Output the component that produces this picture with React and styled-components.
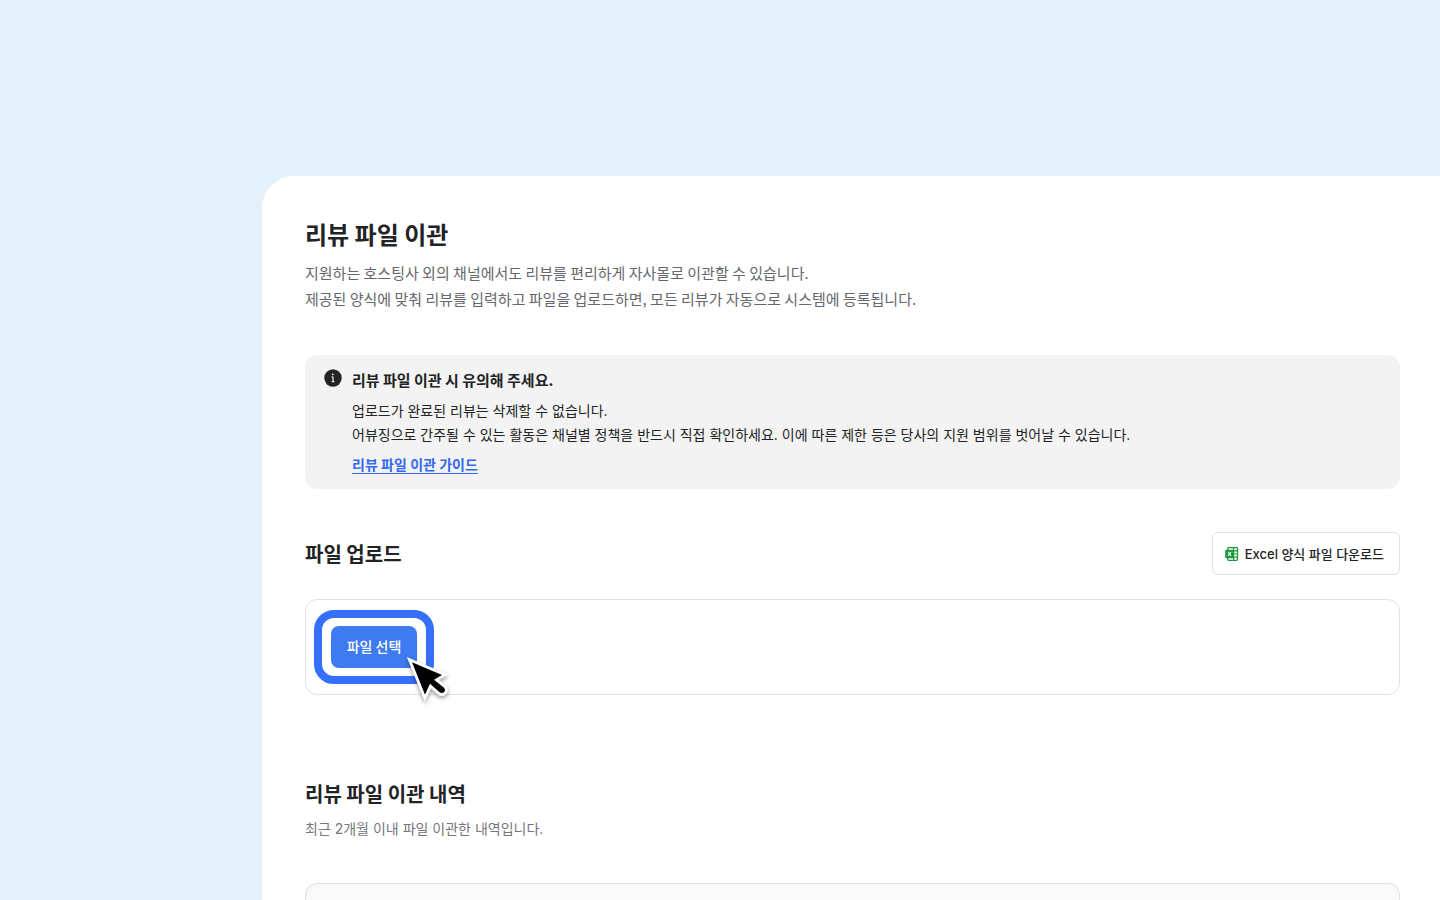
import styled, { createGlobalStyle } from 'styled-components';

const App = () => {
  return (
    <>
      <GlobalStyle />
      <PageStyled>
        <PanelStyled>
          <PageTitle>리뷰 파일 이관</PageTitle>
          <Description>
            지원하는 호스팅사 외의 채널에서도 리뷰를 편리하게 자사몰로 이관할 수 있습니다.
            <br />
            제공된 양식에 맞춰 리뷰를 입력하고 파일을 업로드하면, 모든 리뷰가 자동으로 시스템에 등록됩니다.
          </Description>

          <NoticeStyled>
            <InfoIcon />
            <div>
              <h2>리뷰 파일 이관 시 유의해 주세요.</h2>
              <p>
                업로드가 완료된 리뷰는 삭제할 수 없습니다.
                <br />
                어뷰징으로 간주될 수 있는 활동은 채널별 정책을 반드시 직접 확인하세요. 이에 따른 제한 등은 당사의 지원 범위를 벗어날 수 있습니다.
              </p>
              <a href="#guide">리뷰 파일 이관 가이드</a>
            </div>
          </NoticeStyled>

          <UploadHeader>
            <SectionTitle>파일 업로드</SectionTitle>
            <DownloadButton type="button">
              <ExcelIcon />
              Excel 양식 파일 다운로드
            </DownloadButton>
          </UploadHeader>

          <UploadBox>
            <Highlight>
              <SelectButton type="button">파일 선택</SelectButton>
              <Cursor />
            </Highlight>
          </UploadBox>

          <HistoryStyled>
            <SectionTitle>리뷰 파일 이관 내역</SectionTitle>
            <p>최근 2개월 이내 파일 이관한 내역입니다.</p>
            <HistoryList />
          </HistoryStyled>
        </PanelStyled>
      </PageStyled>
    </>
  );
};

const InfoIcon = () => (
  <svg width="18" height="18" viewBox="0 0 18 18" aria-hidden="true">
    <circle cx="9" cy="9" r="8.7" fill="#222325" />
    <circle cx="8.8" cy="5.3" r="0.9" fill="#fff" />
    <path d="M7.4 8h1.6v4.6M7.6 12.7h2.8" fill="none" stroke="#fff" strokeWidth="1.1" />
  </svg>
);

const ExcelIcon = () => (
  <svg width="14" height="16" viewBox="0 0 14 16" aria-hidden="true">
    <rect x="2.8" y="1.6" width="9.7" height="12.8" rx="0.8" fill="#fff" stroke="#1c9a3c" strokeWidth="1.3" />
    <path d="M8.6 1.5v13M3 4.8h9.5M8 8h4.7M3 11.2h9.5" stroke="#1c9a3c" strokeWidth="1.2" />
    <rect x="0.2" y="3.8" width="8.8" height="8.4" rx="0.8" fill="#1c9a3c" />
    <path d="M3.2 6.1l2.8 3.8M6 6.1l-2.8 3.8" stroke="#fff" strokeWidth="1.1" />
  </svg>
);

const Cursor = () => (
  <CursorStyled viewBox="0 0 192 192" aria-hidden="true">
    <path
      d="M51 52L141 90L117 104L147 128Q153 135 147 142Q140 147 133 141L105 116L90 149Z"
      fill="#000"
      stroke="#fff"
      strokeWidth="17"
      strokeLinejoin="miter"
      paintOrder="stroke"
    />
  </CursorStyled>
);

const GlobalStyle = createGlobalStyle`
  * {
    box-sizing: border-box;
    margin: 0;
  }

  body {
    background: #e4f1fa;
    color: #222325;
    font-family: 'Noto Sans CJK KR', sans-serif;
  }

  button {
    font-family: inherit;
    cursor: pointer;
  }
`;

const PageStyled = styled.div`
  display: flex;
  height: 100vh;
  padding: 176px 0 0 262px;
  overflow: hidden;
`;

const PanelStyled = styled.main`
  flex: 1;
  min-width: 0;
  display: flex;
  flex-direction: column;
  padding: 40px 40px 0 43px;
  border-top-left-radius: 32px;
  background: #fff;
`;

const PageTitle = styled.h1`
  font-size: 24px;
  line-height: 36px;
  font-weight: 700;
`;

const Description = styled.p`
  margin-top: 8px;
  font-size: 15px;
  line-height: 26px;
  color: #66676d;
`;

const NoticeStyled = styled.section`
  display: flex;
  align-items: flex-start;
  gap: 10px;
  margin-top: 43px;
  padding: 14px 19px 12px;
  border-radius: 12px;
  background: #f3f3f3;

  svg {
    flex: none;
  }

  h2 {
    font-size: 15px;
    line-height: 22px;
    font-weight: 700;
  }

  p {
    margin: 8px 0 6px;
    font-family: Inter, 'Noto Sans CJK KR', sans-serif;
    font-size: 14px;
    line-height: 24px;
  }

  a {
    display: block;
    width: fit-content;
    font-family: Inter, 'Noto Sans CJK KR', sans-serif;
    font-size: 14px;
    line-height: 24px;
    font-weight: 700;
    color: #3568f0;
    text-underline-offset: 3px;
  }
`;

const UploadHeader = styled.div`
  display: flex;
  align-items: center;
  justify-content: space-between;
  margin-top: 43px;
`;

const SectionTitle = styled.h2`
  font-size: 20px;
  line-height: 28px;
  font-weight: 700;
`;

const DownloadButton = styled.button`
  display: flex;
  align-items: center;
  gap: 6px;
  height: 43px;
  padding: 0 15px 0 12px;
  border: 1px solid #e2e2e3;
  border-radius: 6px;
  background: #fff;
  color: #222325;
  font-family: Inter, 'Noto Sans CJK KR', sans-serif;
  font-size: 13px;
  font-weight: 500;
`;

const UploadBox = styled.div`
  display: flex;
  margin-top: 24px;
  padding: 10px 8px;
  border: 1px solid #e2e2e3;
  border-radius: 12px;
`;

const Highlight = styled.div`
  position: relative;
  padding: 8px 9px;
  border: 8px solid #3470fb;
  border-radius: 20px;
`;

const SelectButton = styled.button`
  display: block;
  width: 86px;
  height: 42px;
  padding: 0 0 2px;
  border: 0;
  border-radius: 8px;
  background: #3e7bf0;
  color: #fff;
  font-size: 14px;
  font-weight: 500;
`;

const CursorStyled = styled.svg`
  position: absolute;
  top: 27px;
  left: 73px;
  width: 64px;
  height: 64px;
  pointer-events: none;
  filter: drop-shadow(0 2px 2px rgb(0 0 0 / 0.4));
`;

const HistoryStyled = styled.section`
  flex: 1;
  display: flex;
  flex-direction: column;
  margin-top: 85px;

  p {
    margin-top: 9px;
    font-family: Inter, 'Noto Sans CJK KR', sans-serif;
    font-size: 14px;
    line-height: 24px;
    color: #75767c;
  }
`;

const HistoryList = styled.div`
  flex: 1;
  margin-top: 42px;
  border: 1px solid #e2e2e3;
  border-bottom: 0;
  border-radius: 12px 12px 0 0;
  background: #f9f9f9;
`;

export default App;
